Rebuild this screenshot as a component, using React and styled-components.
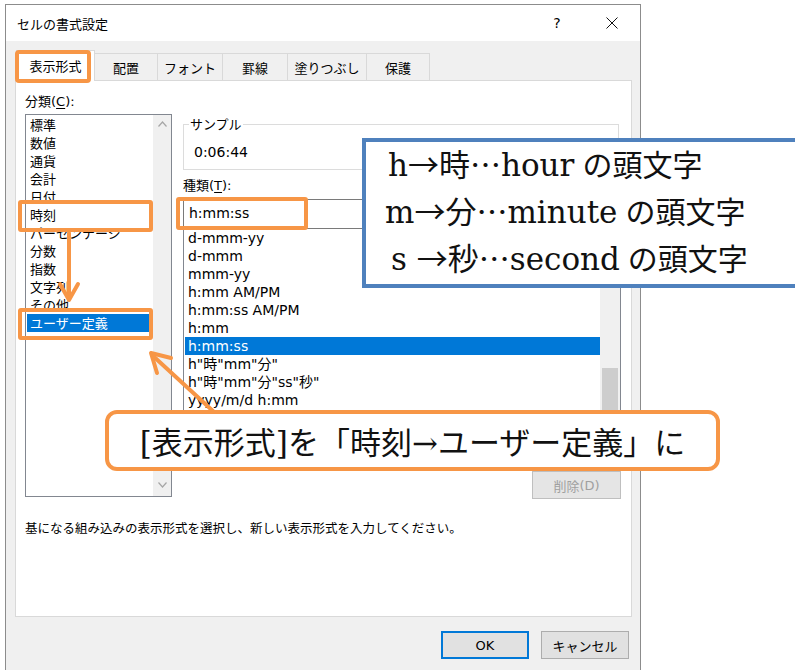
import React from "react";
import styled, { createGlobalStyle, css } from "styled-components";

const UI_FONT = `"DejaVu Sans", "Noto Sans CJK JP", sans-serif`;
const JP_FONT = `"Noto Sans CJK JP", sans-serif`;
const NOTE_FONT = `"DejaVu Serif", "Noto Sans CJK JP", serif`;
const ORANGE = "#f79646";

const GlobalStyle = createGlobalStyle`
  html, body {
    margin: 0;
    background: #fff;
  }
  * {
    box-sizing: border-box;
  }
`;

const Page = styled.div`
  position: relative;
  width: 795px;
  height: 670px;
  overflow: hidden;
  padding: 4px 0 0 5px;
  font-family: ${UI_FONT};
  color: #000;
`;

const Dialog = styled.div`
  width: 636px;
  height: 680px;
  border: 1px solid #8c8c8c;
  background: #f0f0f0;
  display: flex;
  flex-direction: column;
`;

const TitleBar = styled.div`
  height: 36px;
  background: #fff;
  display: flex;
  align-items: center;
  justify-content: space-between;
  padding-left: 11px;
`;

const Title = styled.div`
  font-family: ${JP_FONT};
  font-size: 13px;
`;

const TitleButtons = styled.div`
  display: flex;
  gap: 9px;
  padding-right: 5px;
`;

const TitleButton = styled.div`
  width: 46px;
  height: 30px;
  display: flex;
  align-items: center;
  justify-content: center;
  font-size: 14px;
`;

const Body = styled.div`
  padding: 0 8px 0 9px;
  display: flex;
  flex-direction: column;
`;

const TabStrip = styled.div`
  height: 39px;
  display: flex;
  align-items: flex-end;
  padding-left: 2px;
  position: relative;
  z-index: 1;
`;

const Tab = styled.div`
  position: relative;
  width: ${(p) => p.$w}px;
  height: 27px;
  display: flex;
  align-items: center;
  justify-content: center;
  font-family: ${JP_FONT};
  font-size: 13px;
  background: #f0f0f0;
  border: 1px solid #d9d9d9;
  border-bottom: none;
  margin-left: -1px;

  ${(p) =>
    p.$active &&
    css`
      height: 31px;
      margin-bottom: -1px;
      background: #fff;
      padding-bottom: 2px;
    `}

  ${(p) =>
    p.$marked &&
    css`
      &::after {
        content: "";
        position: absolute;
        top: -1px;
        left: -2px;
        right: 3px;
        bottom: -2px;
        border: 4px solid ${ORANGE};
        border-radius: 4px;
      }
    `}
`;

const Panel = styled.div`
  height: 537px;
  background: #fff;
  border: 1px solid #d9d9d9;
  padding: 12px 10px 0 9px;
  display: flex;
  flex-direction: column;
`;

const Columns = styled.div`
  display: flex;
  gap: 11px;
`;

const LeftCol = styled.div`
  width: 147px;
  display: flex;
  flex-direction: column;
`;

const RightCol = styled.div`
  flex: 1;
  display: flex;
  flex-direction: column;
  padding-top: 23px;
`;

const Label = styled.div`
  font-size: 13px;
  line-height: 16px;
  height: 16px;

  u {
    text-underline-offset: 2px;
  }
`;

const CategoryBox = styled.div`
  position: relative;
  margin-top: 5px;
  height: 383px;
  border: 1px solid #828790;
  display: flex;
`;

const CategoryItems = styled.div`
  flex: 1;
  padding: 1px 0 0 1px;
`;

const CategoryItem = styled.div`
  position: relative;
  height: 18px;
  line-height: 18px;
  padding-left: 3px;
  font-family: ${JP_FONT};
  font-size: 13px;
  margin-right: 4px;

  ${(p) =>
    p.$selected &&
    css`
      background: #0078d7;
      color: #fff;
    `}

  ${(p) =>
    p.$marked &&
    css`
      &::after {
        content: "";
        position: absolute;
        z-index: 2;
        top: -6px;
        bottom: -8px;
        left: -9px;
        right: -4px;
        border: 4px solid ${ORANGE};
        border-radius: 3px;
      }
    `}
`;

const ScrollTrack = styled.div`
  width: 18px;
  background: #f0f0f0;
  display: flex;
  flex-direction: column;
  justify-content: space-between;
  align-items: center;
  padding: 6px 0 8px;
`;

const Group = styled.fieldset`
  margin: 0;
  width: 436px;
  height: 54px;
  padding: 0 0 0 10px;
  border: 1px solid #dcdcdc;

  legend {
    font-family: ${JP_FONT};
    font-size: 13px;
    line-height: 16px;
    padding: 0 1px;
    margin-left: -5px;
  }
`;

const SampleValue = styled.div`
  font-size: 14px;
  line-height: 18px;
  margin-top: 11px;
`;

const TypeLabel = styled(Label)`
  margin-top: 7px;
`;

const TypeInput = styled.div`
  position: relative;
  margin-top: 6px;
  height: 30px;
  border: 1px solid #7a7a7a;
  padding-left: 5px;
  font-size: 14px;
  line-height: 27px;

  &::after {
    content: "";
    position: absolute;
    top: -3px;
    left: -8px;
    right: 312px;
    bottom: -2px;
    border: 4px solid ${ORANGE};
    border-radius: 3px;
  }
`;

const TypeList = styled.div`
  height: 240px;
  border: 1px solid #828790;
  border-top: none;
  display: flex;
`;

const TypeItems = styled.div`
  flex: 1;
  padding: 0 0 0 1px;
`;

const TypeItem = styled.div`
  height: 18px;
  line-height: 18px;
  padding-left: 3px;
  font-size: 14px;
  white-space: nowrap;

  ${(p) =>
    p.$selected &&
    css`
      background: #0078d7;
      color: #fff;
    `}
`;

const Scrollbar = styled.div`
  width: 20px;
  background: #f0f0f0;
  padding: 139px 2px 0;
`;

const Thumb = styled.div`
  height: 80px;
  background: #cdcdcd;
`;

const ActionRow = styled.div`
  display: flex;
  justify-content: flex-end;
  margin-top: 2px;
`;

const Button = styled.div`
  width: ${(p) => p.$w || 88}px;
  height: 28px;
  display: flex;
  align-items: center;
  justify-content: center;
  background: #e1e1e1;
  border: 1px solid #adadad;
  font-family: ${UI_FONT};
  font-size: 13px;
  color: #000;

  ${(p) =>
    p.$default &&
    css`
      border: 2px solid #0078d7;
    `}

  ${(p) =>
    p.$disabled &&
    css`
      color: #a0a0a0;
      border-color: #bfbfbf;
      background: #e5e5e5;
    `}
`;

const Hint = styled.div`
  margin-top: 21px;
  font-family: ${JP_FONT};
  font-size: 12.5px;
  line-height: 16px;
`;

const Footer = styled.div`
  display: flex;
  justify-content: flex-end;
  gap: 12px;
  margin-top: 14px;
  padding-right: 3px;
`;

const Annotations = styled.svg`
  position: absolute;
  left: 0;
  top: 0;
  pointer-events: none;
`;

const Note = styled.div`
  position: absolute;
  background: #fff;
  font-family: ${NOTE_FONT};
  color: #111;
`;

const TermNote = styled(Note)`
  left: 362px;
  top: 138px;
  width: 460px;
  height: 150px;
  border: 4px solid #4f81bd;
  padding: 0 0 0 19px;
  font-size: 31px;
  display: flex;
  flex-direction: column;
`;

const TermLine = styled.div`
  height: 47px;
  line-height: 42px;
  white-space: nowrap;
  padding-left: ${(p) => p.$indent || 0}px;
`;

const StepNote = styled(Note)`
  left: 105px;
  top: 410px;
  width: 615px;
  height: 61px;
  border: 4px solid ${ORANGE};
  border-radius: 12px;
  font-size: 31px;
  display: flex;
  align-items: center;
  justify-content: center;
`;

const Sym = styled.span`
  font-family: ${JP_FONT};
`;

const Jp = styled.span`
  font-family: ${JP_FONT};
  font-size: 30px;
  margin-left: 8px;
`;

const tabs = [
  { label: "表示形式", w: 79, active: true },
  { label: "配置", w: 64 },
  { label: "フォント", w: 66 },
  { label: "罫線", w: 66 },
  { label: "塗りつぶし", w: 80 },
  { label: "保護", w: 64 },
];

const categories = [
  "標準",
  "数値",
  "通貨",
  "会計",
  "日付",
  "時刻",
  "パーセンテージ",
  "分数",
  "指数",
  "文字列",
  "その他",
  "ユーザー定義",
];

const formats = [
  "d-mmm-yy",
  "d-mmm",
  "mmm-yy",
  "h:mm AM/PM",
  "h:mm:ss AM/PM",
  "h:mm",
  "h:mm:ss",
  'h"時"mm"分"',
  'h"時"mm"分"ss"秒"',
  "yyyy/m/d h:mm",
];

const terms = [
  { letter: "h", kanji: "時", word: "hour", indent: 3 },
  { letter: "m", kanji: "分", word: "minute", indent: 0 },
  { letter: "s ", kanji: "秒", word: "second", indent: 6 },
];

const Chevron = ({ up }) => (
  <svg width="9" height="6" viewBox="0 0 9 6">
    <polyline
      points={up ? "0.5,5.5 4.5,1 8.5,5.5" : "0.5,0.5 4.5,5 8.5,0.5"}
      fill="none"
      stroke="#a6a6a6"
      strokeWidth="1.2"
    />
  </svg>
);

const CloseIcon = () => (
  <svg width="12" height="12" viewBox="0 0 12 12">
    <path d="M0.5 0.5 L11.5 11.5 M11.5 0.5 L0.5 11.5" stroke="#111" strokeWidth="1" />
  </svg>
);

export default function App() {
  return (
    <>
      <GlobalStyle />
      <Page>
        <Dialog>
          <TitleBar>
            <Title>セルの書式設定</Title>
            <TitleButtons>
              <TitleButton>?</TitleButton>
              <TitleButton>
                <CloseIcon />
              </TitleButton>
            </TitleButtons>
          </TitleBar>

          <Body>
            <TabStrip>
              {tabs.map((t) => (
                <Tab key={t.label} $w={t.w} $active={t.active} $marked={t.active}>
                  {t.label}
                </Tab>
              ))}
            </TabStrip>

            <Panel>
              <Columns>
                <LeftCol>
                  <Label>
                    <Sym>分類</Sym>(<u>C</u>):
                  </Label>
                  <CategoryBox>
                    <CategoryItems>
                      {categories.map((c) => (
                        <CategoryItem
                          key={c}
                          $selected={c === "ユーザー定義"}
                          $marked={c === "時刻" || c === "ユーザー定義"}
                        >
                          {c}
                        </CategoryItem>
                      ))}
                    </CategoryItems>
                    <ScrollTrack>
                      <Chevron up />
                      <Chevron />
                    </ScrollTrack>
                  </CategoryBox>
                </LeftCol>

                <RightCol>
                  <Group>
                    <legend>サンプル</legend>
                    <SampleValue>0:06:44</SampleValue>
                  </Group>
                  <TypeLabel>
                    <Sym>種類</Sym>(<u>T</u>):
                  </TypeLabel>
                  <TypeInput>h:mm:ss</TypeInput>
                  <TypeList>
                    <TypeItems>
                      {formats.map((f) => (
                        <TypeItem key={f} $selected={f === "h:mm:ss"}>
                          {f}
                        </TypeItem>
                      ))}
                    </TypeItems>
                    <Scrollbar>
                      <Thumb />
                    </Scrollbar>
                  </TypeList>
                  <ActionRow>
                    <Button $w={89} $disabled>
                      <Sym>削除</Sym>(D)
                    </Button>
                  </ActionRow>
                </RightCol>
              </Columns>

              <Hint>基になる組み込みの表示形式を選択し、新しい表示形式を入力してください。</Hint>
            </Panel>

            <Footer>
              <Button $default>OK</Button>
              <Button>
                <Sym>キャンセル</Sym>
              </Button>
            </Footer>
          </Body>
        </Dialog>

        <Annotations width="795" height="670" viewBox="0 0 795 670">
          <g stroke={ORANGE} strokeWidth="4" fill="none" strokeLinecap="round" strokeLinejoin="round">
            <line x1="69" y1="233" x2="69" y2="298" />
            <polyline points="60,284 69,300 78,284" />
            <line x1="214" y1="412" x2="152" y2="355" />
            <polyline points="157,373 151,353 171,358" />
          </g>
        </Annotations>

        <TermNote>
          {terms.map((t) => (
            <TermLine key={t.word} $indent={t.indent}>
              {t.letter}
              <Sym>→{t.kanji}…</Sym>
              {t.word}
              <Jp>の頭文字</Jp>
            </TermLine>
          ))}
        </TermNote>

        <StepNote>[表示形式]を「時刻→ユーザー定義」に</StepNote>
      </Page>
    </>
  );
}
